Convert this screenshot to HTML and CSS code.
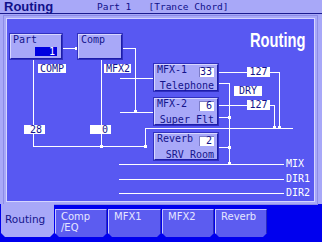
FILE: index.html
```html
<!DOCTYPE html>
<html>
<head>
<meta charset="utf-8">
<link rel="stylesheet" href="styles.css">
</head>
<body>
<div class="screen">
  <header class="titlebar">
    <span class="title">Routing</span>
    <span class="subtitle">Part 1   [Trance Chord]</span>
  </header>
  <main class="frame">
    <div class="canvas">
      <svg class="wires" width="307" height="182" viewBox="0 0 307 182" shape-rendering="crispEdges">
        <path fill="none" stroke="#ffffff" stroke-width="1" d="
          M55 29.5H71 M115 29.5H128.5 M128.5 29V93
          M26.5 40V127 M94.5 40V127 M26 127.5H138.5 M138.5 109V127 M138 109.5H286
          M113 59.5H147 M113 93.5H147
          M211 53.5H240 M263 53.5H272.5 M272.5 53V109
          M211 86.5H240 M263 86.5H267.5 M267.5 86V109
          M211 64.5H222.5 M222.5 64V145
          M211 98.5H222 M211 128.5H222
          M112 145.5H277 M112 160.5H277 M112 174.5H277"/>
        <g fill="#ffffff">
          <rect x="68" y="28" width="3" height="3"/>
          <rect x="127" y="91" width="3" height="3"/>
          <rect x="93" y="126" width="3" height="3"/>
          <rect x="137" y="126" width="3" height="3"/>
          <rect x="271" y="107" width="3" height="3"/>
          <rect x="266" y="107" width="3" height="3"/>
          <rect x="221" y="143" width="3" height="3"/>
          <rect x="221" y="97" width="3" height="3"/>
          <rect x="221" y="127" width="3" height="3"/>
        </g>
      </svg>

      <div class="node part">
        <span class="name">Part</span>
        <span class="field dark">1</span>
      </div>
      <div class="node comp">
        <span class="name">Comp</span>
      </div>

      <div class="node fx mfx1">
        <div class="row"><span class="name">MFX-1</span><span class="field">33</span></div>
        <div class="sub">Telephone</div>
      </div>
      <div class="node fx mfx2">
        <div class="row"><span class="name">MFX-2</span><span class="field">6</span></div>
        <div class="sub">Super Flt</div>
      </div>
      <div class="node fx rev">
        <div class="row"><span class="name">Reverb</span><span class="field">2</span></div>
        <div class="sub">SRV Room</div>
      </div>

      <span class="tag left t-comp">COMP</span>
      <span class="tag left t-mfx2">MFX2</span>
      <span class="tag right t-28">28</span>
      <span class="tag right t-0">0</span>
      <span class="tag t-127a">127</span>
      <span class="tag t-127b">127</span>
      <span class="tag t-dry">DRY</span>

      <span class="out o-mix">MIX</span>
      <span class="out o-dir1">DIR1</span>
      <span class="out o-dir2">DIR2</span>

      <span class="bigtitle">Routing</span>
    </div>
  </main>
  <nav class="tabs">
    <div class="tab active">Routing</div>
    <div class="tab">Comp<br>/EQ</div>
    <div class="tab">MFX1</div>
    <div class="tab">MFX2</div>
    <div class="tab">Reverb</div>
  </nav>
</div>
</body>
</html>
```
FILE: styles.css
```css
* { box-sizing: border-box; }

html, body {
  margin: 0;
  padding: 0;
}

body {
  width: 322px;
  height: 242px;
  overflow: hidden;
  background: #0000ee;
  font-family: "DejaVu Sans Mono", monospace;
  color: #14148c;
}

.screen {
  width: 322px;
  height: 242px;
}

.titlebar {
  height: 14px;
  background: #a8a8f8;
  border-bottom: 1px solid #1a1a90;
  display: flex;
  align-items: flex-start;
  padding-left: 4px;
}

.title {
  width: 93px;
  font-family: "Liberation Sans", Arial, sans-serif;
  font-weight: bold;
  font-size: 13px;
  line-height: 13px;
  color: #10108a;
}

.subtitle {
  white-space: pre;
  font-size: 9.5px;
  line-height: 14px;
  color: #10108a;
}

.frame {
  background: #a8a8f8;
  padding: 4px 7px 2px 6px;
}

.canvas {
  position: relative;
  height: 184px;
  background: #5858f2;
  border: 1px solid #d4d4ff;
  box-shadow: 0 0 0 2px #a8a8f8, 0 0 0 3px #8c8ce6;
}

.wires {
  position: absolute;
  left: 0;
  top: 0;
}

.node {
  position: absolute;
  background: #a8a8f8;
  border: 1px solid;
  border-color: #d8d8ff #1c1caa #1c1caa #d8d8ff;
  box-shadow: 0 0 0 1px #3030c0;
  font-size: 10px;
  line-height: 10px;
  color: #14148c;
}

.part {
  left: 3px;
  top: 15px;
  width: 52px;
  height: 25px;
  padding: 0 4px 0 2px;
  display: flex;
  flex-direction: column;
}

.comp {
  left: 71px;
  top: 15px;
  width: 44px;
  height: 25px;
  padding: 0 2px;
}

.field {
  display: block;
  background: #ffffff;
  color: #14148c;
  text-align: right;
  padding-right: 2px;
  box-shadow: inset 1px 1px 0 #7c7cc8;
}

.field.dark {
  align-self: flex-end;
  margin-top: 2px;
  width: 22px;
  height: 9px;
  line-height: 9px;
  background: #0000e0;
  color: #ffffff;
  box-shadow: none;
}

.fx {
  left: 147px;
  width: 64px;
  height: 27px;
  padding: 0 3px 0 2px;
}

.mfx1 { top: 45px; }
.mfx2 { top: 79px; }
.rev  { top: 114px; }

.fx .row {
  display: flex;
  justify-content: space-between;
  align-items: flex-start;
  height: 16px;
}

.fx .field {
  margin-top: 2px;
  width: 15px;
  height: 10px;
  line-height: 10px;
}

.fx .sub {
  text-align: right;
}

.tag {
  position: absolute;
  background: #ffffff;
  color: #14148c;
  font-size: 10px;
  line-height: 9px;
  height: 9px;
  text-align: center;
}

.tag.left { text-align: left; padding-left: 2px; }
.tag.right { text-align: right; padding-right: 3px; }

.t-comp { left: 31px; top: 45px; width: 28px; }
.t-mfx2 { left: 97px; top: 45px; width: 27px; }
.t-28   { left: 17px; top: 106px; width: 21px; }
.t-0    { left: 83px; top: 106px; width: 21px; }
.t-127a { left: 240px; top: 48px; width: 23px; height: 10px; line-height: 10px; }
.t-127b { left: 240px; top: 81px; width: 23px; height: 10px; line-height: 10px; }
.t-dry  { left: 227px; top: 67px; width: 28px; height: 10px; line-height: 10px; }

.out {
  position: absolute;
  left: 279px;
  font-size: 10px;
  line-height: 10px;
  color: #ffffff;
}

.o-mix  { top: 140px; }
.o-dir1 { top: 155px; }
.o-dir2 { top: 169px; }

.bigtitle {
  position: absolute;
  left: 243px;
  top: 11px;
  font-family: "Liberation Sans", Arial, sans-serif;
  font-weight: bold;
  font-size: 21px;
  line-height: 20px;
  color: #ffffff;
  transform: scaleX(0.7);
  transform-origin: left top;
  white-space: nowrap;
}

.tabs {
  display: flex;
  gap: 1px;
  height: 33px;
  padding-left: 1px;
}

.tab {
  width: 52px;
  height: 28px;
  margin-top: 5px;
  background: #5c5cf0;
  border-top: 1px solid #c4c4ff;
  border-left: 1px solid #c4c4ff;
  border-right: 1px solid #2a2ac0;
  clip-path: polygon(0 0, 100% 0, 100% calc(100% - 4px), calc(100% - 4px) 100%, 4px 100%, 0 calc(100% - 4px));
  font-family: "DejaVu Sans", sans-serif;
  font-size: 10px;
  line-height: 11px;
  color: #e6e6ff;
  padding: 1px 0 0 5px;
}

.tab:nth-child(1), .tab:nth-child(3) { width: 53px; }

.tab.active {
  height: 33px;
  margin-top: 0;
  background: #a8a8f8;
  border: none;
  color: #14148c;
  padding: 10px 0 0 4px;
  font-size: 10.5px;
}
```
